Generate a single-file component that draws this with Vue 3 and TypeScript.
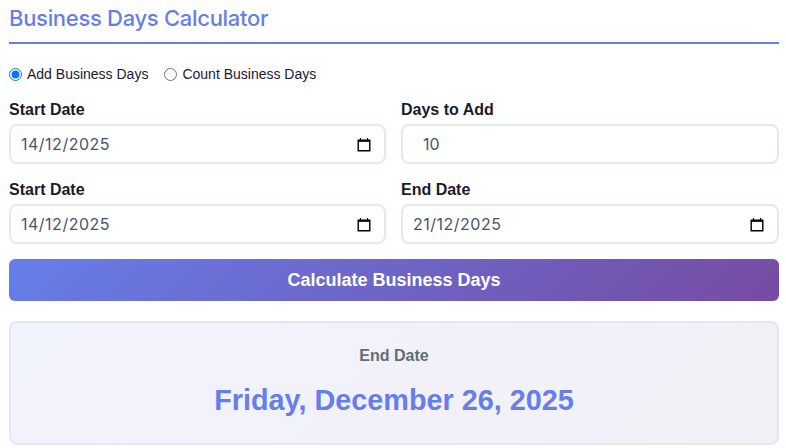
<script setup lang="ts">
import { ref } from 'vue'
const mode = ref('add')
const startA = ref('14/12/2025')
const days = ref('10')
const startB = ref('14/12/2025')
const endB = ref('21/12/2025')
</script>

<template>
  <div class="page">
    <h2 class="title">Business Days Calculator</h2>
    <div class="modes">
      <label class="mode"><input v-model="mode" type="radio" value="add" /><span>Add Business Days</span></label>
      <label class="mode"><input v-model="mode" type="radio" value="count" /><span>Count Business Days</span></label>
    </div>
    <div class="grid">
      <div class="field">
        <label>Start Date</label>
        <div class="box">
          <input v-model="startA" type="text" />
          <svg class="cal" viewBox="0 0 14 15" width="14" height="15"><path d="M1.2 3.5h11.6v10.3H1.2z" fill="none" stroke="#000" stroke-width="1.4"/><path d="M1 2.6h12v2.2H1z" fill="#000"/><path d="M3.5 1v2M10.5 1v2" stroke="#000" stroke-width="1.2"/></svg>
        </div>
      </div>
      <div class="field">
        <label>Days to Add</label>
        <div class="box"><input v-model="days" class="num" type="text" /></div>
      </div>
      <div class="field">
        <label>Start Date</label>
        <div class="box">
          <input v-model="startB" type="text" />
          <svg class="cal" viewBox="0 0 14 15" width="14" height="15"><path d="M1.2 3.5h11.6v10.3H1.2z" fill="none" stroke="#000" stroke-width="1.4"/><path d="M1 2.6h12v2.2H1z" fill="#000"/><path d="M3.5 1v2M10.5 1v2" stroke="#000" stroke-width="1.2"/></svg>
        </div>
      </div>
      <div class="field">
        <label>End Date</label>
        <div class="box">
          <input v-model="endB" type="text" />
          <svg class="cal" viewBox="0 0 14 15" width="14" height="15"><path d="M1.2 3.5h11.6v10.3H1.2z" fill="none" stroke="#000" stroke-width="1.4"/><path d="M1 2.6h12v2.2H1z" fill="#000"/><path d="M3.5 1v2M10.5 1v2" stroke="#000" stroke-width="1.2"/></svg>
        </div>
      </div>
    </div>
    <button class="calc" type="button">Calculate Business Days</button>
    <div class="result">
      <div class="result-label">End Date</div>
      <div class="result-value">Friday, December 26, 2025</div>
    </div>
  </div>
</template>

<style>
html, body { margin: 0; background: #fff; overflow: hidden; }
</style>

<style scoped>
.page {
  box-sizing: border-box;
  width: 786px;
  height: 448px;
  padding: 6px 7px 0 9px;
  font-family: "Liberation Sans", Arial, sans-serif;
  display: flex;
  flex-direction: column;
}
.title {
  margin: 0;
  height: 36px;
  font-family: Inter, sans-serif;
  font-size: 22px;
  line-height: 25px;
  font-weight: 500;
  letter-spacing: -0.3px;
  color: #667eea;
  border-bottom: 2px solid #667eea;
}
.modes {
  display: flex;
  gap: 16px;
  margin-top: 22px;
  height: 16px;
  align-items: center;
}
.mode {
  display: flex;
  align-items: center;
  gap: 5px;
  font-size: 14px;
  color: #1a1a2e;
}
.mode input {
  margin: 0;
  width: 13px;
  height: 13px;
}
.grid {
  display: grid;
  grid-template-columns: 377px 378px;
  column-gap: 15px;
  row-gap: 16px;
  margin-top: 18px;
}
.field {
  display: flex;
  flex-direction: column;
  gap: 6px;
}
.field label {
  font-size: 16px;
  line-height: 20px;
  font-weight: 700;
  color: #1a1a2e;
  height: 18px;
}
.box {
  box-sizing: border-box;
  height: 40px;
  border: 2px solid #e2e8f0;
  border-radius: 8px;
  background: #fff;
  display: flex;
  align-items: center;
  padding: 0 13px 0 10px;
}
.box input {
  flex: 1;
  min-width: 0;
  border: 0;
  outline: 0;
  padding: 0;
  background: transparent;
  font-family: Inter, sans-serif;
  font-size: 16px;
  letter-spacing: 0.5px;
  color: #4a5568;
}
.box input.num { padding-left: 10px; letter-spacing: 0; }
.cal { flex: none; }
.calc {
  margin-top: 15px;
  height: 42px;
  border: 0;
  border-radius: 6px;
  background: linear-gradient(135deg, #667eea 0%, #764ba2 100%);
  color: #fff;
  font-family: "Liberation Sans", Arial, sans-serif;
  font-size: 18px;
  font-weight: 700;
  padding: 0;
}
.result {
  box-sizing: border-box;
  margin-top: 20px;
  height: 124px;
  border: 2px solid #e2e8f0;
  border-radius: 8px;
  background: linear-gradient(135deg, rgba(102,126,234,.09) 0%, rgba(118,75,162,.09) 100%);
  text-align: center;
  padding-top: 24px;
}
.result-label {
  font-size: 16px;
  line-height: 18px;
  font-weight: 700;
  color: #5f6f73;
}
.result-value {
  margin-top: 17px;
  font-size: 28.8px;
  line-height: 37px;
  font-weight: 700;
  color: #667eea;
}
</style>
